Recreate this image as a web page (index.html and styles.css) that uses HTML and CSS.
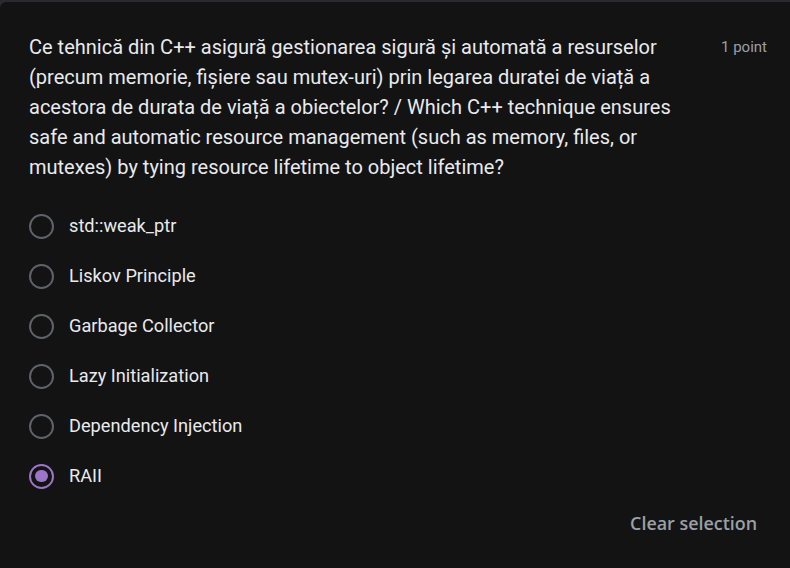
FILE: index.html
```html
<!DOCTYPE html>
<html lang="ro">
<head>
<meta charset="utf-8">
<title>Question</title>
<link rel="stylesheet" href="styles.css">
</head>
<body>
<div class="card">
  <div class="head">
    <div class="title">Ce tehnică din C++ asigură gestionarea sigură și automată a resurselor (precum memorie, fișiere sau mutex-uri) prin legarea duratei de viață a acestora de durata de viață a obiectelor? / Which C++ technique ensures safe and automatic resource management (such as memory, files, or mutexes) by tying resource lifetime to object lifetime?</div>
    <div class="points">1 point</div>
  </div>
  <div class="options">
    <label class="opt"><span class="radio"></span><span class="label">std::weak_ptr</span></label>
    <label class="opt"><span class="radio"></span><span class="label">Liskov Principle</span></label>
    <label class="opt"><span class="radio"></span><span class="label">Garbage Collector</span></label>
    <label class="opt"><span class="radio"></span><span class="label">Lazy Initialization</span></label>
    <label class="opt"><span class="radio"></span><span class="label">Dependency Injection</span></label>
    <label class="opt"><span class="radio checked"></span><span class="label">RAII</span></label>
  </div>
  <div class="foot">
    <span class="clear">Clear selection</span>
  </div>
</div>
</body>
</html>
```
FILE: styles.css
```css
html, body {
  margin: 0;
  padding: 0;
  background: #2b2b2f;
  overflow: hidden;
  height: 568px;
}
body {
  font-family: Roboto, "Liberation Sans", sans-serif;
  color: #e8eaed;
}
.card {
  margin-top: 2px;
  width: 820px;
  height: 566px;
  background: #131313;
  border-top-left-radius: 6px;
  box-sizing: border-box;
  padding: 30px 0 0 29px;
}
.head {
  display: flex;
  width: 738px;
  align-items: flex-start;
}
.title {
  flex: 1;
  font-size: 20px;
  line-height: 30px;
  padding-right: 44px;
}
.points {
  font-size: 15px;
  line-height: 30px;
  color: #9aa0a6;
  white-space: nowrap;
}
.options {
  margin-top: 19px;
  display: flex;
  flex-direction: column;
}
.opt {
  display: flex;
  align-items: center;
  height: 50px;
  gap: 15px;
}
.radio {
  width: 25px;
  height: 25px;
  box-sizing: border-box;
  border: 2.5px solid #5f6368;
  border-radius: 50%;
  display: flex;
  align-items: center;
  justify-content: center;
  flex: none;
}
.radio.checked {
  border-color: #9c74c8;
}
.radio.checked::after {
  content: "";
  width: 12.5px;
  height: 12.5px;
  border-radius: 50%;
  background: #9c74c8;
}
.label {
  font-size: 18.2px;
  line-height: 24px;
}
.foot {
  width: 728px;
  display: flex;
  justify-content: flex-end;
  margin-top: 10px;
}
.clear {
  font-family: "Open Sans", "Liberation Sans", sans-serif;
  font-weight: 600;
  font-size: 17.9px;
  line-height: 24px;
  color: #9aa0a6;
}
```
